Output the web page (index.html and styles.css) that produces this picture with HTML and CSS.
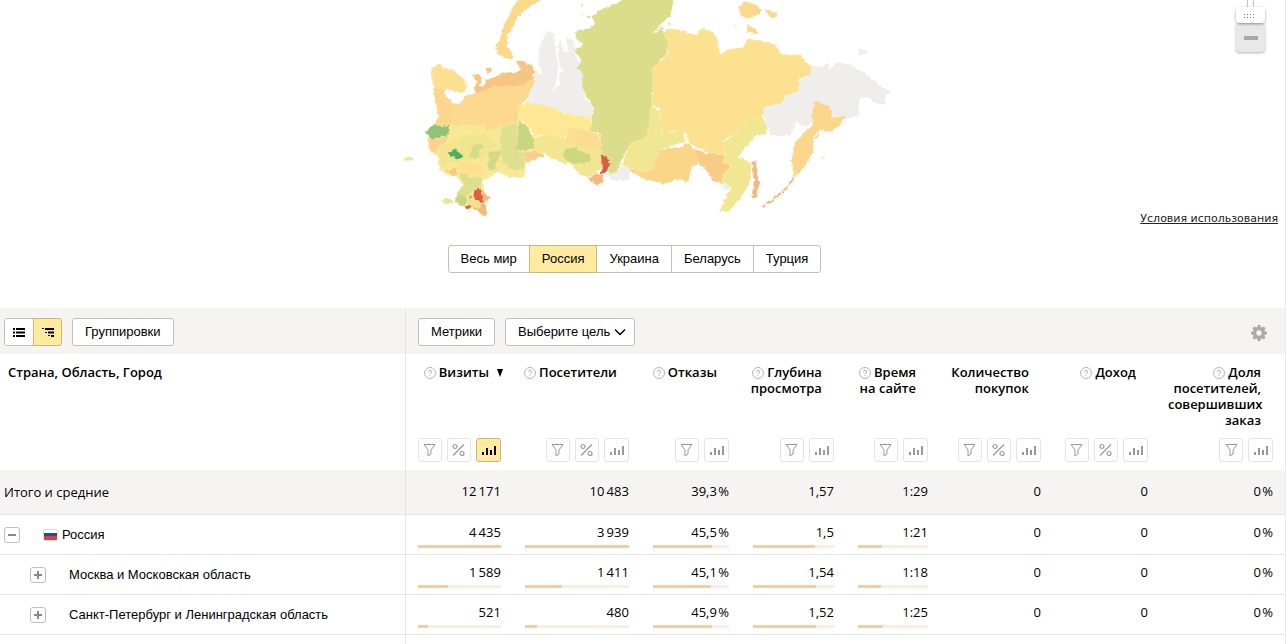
FILE: index.html
```
<!DOCTYPE html>
<html lang="ru">

<head>
    <title>География</title>
    <meta charset="UTF-8">
    <meta name="viewport" content="width=device-width, initial-scale=1">

    <link rel="stylesheet" href="styles.css">
</head>

<body>
    <svg class="sprite" aria-hidden="true">
        <symbol id="i-filter" viewBox="0 0 14 14">
            <path d="M1.5 1.5h11L8.5 7v4l-3 2V7z" fill="none" stroke="currentColor" />
        </symbol>
        <symbol id="i-percent" viewBox="0 0 14 14">
            <path d="M12.5 1.5l-11 11" fill="none" stroke="currentColor" stroke-width="1.3" />
            <circle cx="3.5" cy="3.5" r="2" fill="none" stroke="currentColor" stroke-width="1.2" />
            <circle cx="10.5" cy="10.5" r="2" fill="none" stroke="currentColor" stroke-width="1.2" />
        </symbol>
        <symbol id="i-chart" viewBox="0 0 15 14">
            <path d="M1 9h2v3H1zM5 5h2v7H5zM9 7h2v5H9zM13 3h2v9h-2z" fill="currentColor" />
        </symbol>
        <symbol id="i-help" viewBox="0 0 12 12">
            <circle cx="6" cy="6" r="5.5" fill="none" stroke="#b5b5b5" />
            <path d="M4.4 4.8c0-2 3.200-2 3.200 0 0 1.200-1.600 1.200-1.600 2.400M6 8.200v1" fill="none" stroke="#999" stroke-width=".9" />
        </symbol>
        <symbol id="i-list" viewBox="0 0 12 9">
            <path d="M0 0h2v2H0zM3 0h9v2H3zM0 3.500h2v2H0zM3 3.500h9v2H3zM0 7h2v2H0zM3 7h9v2H3z" />
        </symbol>
        <symbol id="i-tree" viewBox="0 0 12 9">
            <path d="M0 0h2v1H0zM3 0h9v2H3zM3 4h2v1H3zM6 3.500h6v2H6zM6 7h2v1H6zM9 7h3v2H9z" />
        </symbol>
    </svg>

    <main class="page">
        <section class="geo">
            <svg class="map" viewBox="-24 0 1503 660" role="img" aria-label="Карта России">
                <defs>
                    <filter id="coast" x="0" y="0" width="100%" height="100%" color-interpolation-filters="sRGB">
                        <feTurbulence type="fractalNoise" baseFrequency=".09" numOctaves="2" seed="4" />
                        <feDisplacementMap in="SourceGraphic" scale="13" xChannelSelector="R" yChannelSelector="G" />
                    </filter>
                </defs>
                <g filter="url(#coast)" stroke="#fff3c4" stroke-opacity=".5" stroke-width="1">
                    <path d="M0-30H1500" stroke="none" />
                    <!-- european part -->
                    <path fill="#fbd98a" stroke="none" d="M432-4L385 22 355 48 337 85 320 112 324 142 340 165 337 178 312 174 292 157 286 138 300 120 305 90 325 50 343 15 360-4z" />
                    <path fill="#f6c583" stroke="none" d="M258 208L270 202 277 210 268 219 259 222z" />
                    <path fill="#fcd78c" stroke="none" d="M135 310L170 325 180 385 125 385z" />
                    <path fill="#f9e893" d="M105 372L250 375 352 362 405 410 432 462 378 482 375 515 370 530 330 533 290 512 270 530 246 545 250 572 268 595 255 612 262 640 252 650 230 630 200 627 165 605 172 575 190 555 172 530 145 525 120 510 115 470 88 452 82 415z" />
                    <path fill="#fce08f" d="M92 220L102 200 118 190 132 203 152 207 176 222 196 243 201 262 188 278 165 275 142 268 125 272 112 277 100 262 98 245z" />
                    <path fill="#fcd68a" d="M100 262L130 268 138 288 152 300 162 322 154 374 105 374 115 345 108 320z" />
                    <path fill="#fcd98e" d="M160 322L152 308 180 312 200 282 235 278 280 258 370 255 402 225 408 245 385 290 358 320 352 365 300 378 262 392 250 376 165 378 152 374z" />
                    <path fill="#f6c583" d="M218 225L240 222 246 240 238 258 250 260 258 240 285 230 310 215 340 217 358 215 360 205 345 182 365 182 390 192 404 210 398 232 370 258 280 258 260 270 230 280 220 262 232 247z" />
                    <path fill="#8fc377" d="M75 397L100 373 125 378 150 374 147 405 118 412 100 417 86 410z" />
                    <path fill="#fcd38c" d="M82 415L110 417 148 408 135 430 112 440 112 460 88 452z" />
                    <path fill="#f4cd85" d="M190 438L225 432 245 428 215 448 195 452z" />
                    <path fill="#f2e58f" d="M116 446L150 425 200 405 250 402 300 440 260 462 245 480 200 482 150 492 120 510z" />
                    <path fill="#d5db89" d="M220 437L240 430 250 438 238 455 238 470 225 478 207 472 215 450z" />
                    <path fill="#fbe08f" d="M162 492L205 482 245 490 258 520 215 525 180 515z" />
                    <path fill="#f9c983" d="M138 512L165 505 175 520 160 528z" />
                    <path fill="#dfe08e" d="M305 382L352 368 352 440 348 452 365 455 376 460 372 508 345 512 308 490 300 440z" />
                    <path fill="#c8d682" d="M356 365L378 370 390 395 408 425 402 447 375 452 343 448 352 425z" />
                    <path fill="#d2d987" d="M258 462L280 454 300 452 305 462 288 485 290 510 268 512 260 495 270 478z" />
                    <path fill="#fccd88" d="M376 458L402 452 434 466 400 480 374 489z" />
                    <path fill="#dcdf8e" d="M175 520L200 520 205 532 245 530 248 545 240 565 215 575 200 590 200 610 180 618 165 605 172 578 192 556z" />
                    <path fill="#c8d682" d="M172 585L190 582 202 600 195 620 175 612 165 603z" />
                    <path fill="#eee38f" d="M125 600L140 594 165 604 145 612 132 611z" />
                    <path fill="#f5b87a" d="M246 572L262 585 270 595 252 606 262 640 254 650 236 632 212 624 215 605 245 606z" />
                    <path fill="#eee08d" d="M202 600L222 596 248 608 240 625 210 622z" />
                    <path fill="#4fae64" stroke="none" d="M147 457L162 453 168 445 175 457 188 464 184 475 170 478 160 470 150 466z" />
                    <path fill="#dc5f43" stroke="none" d="M222 575L232 565 242 570 246 590 252 606 232 603 220 595z" />
                    <path fill="#dc5f43" stroke="none" d="M195 620L208 614 211 624 200 628zM204 590L212 588 210 594z" />
                    <path fill="#eee38f" stroke="none" d="M14 476L28 469 42 475 38 482 22 482z" />
                    <!-- siberia -->
                    <path fill="#efeeec" stroke="none" d="M400 208L428 224 415 185 418 140 430 115 445 93 463 100 466 150 474 200 470 245 458 272 480 255 478 220 495 212 480 207 474 160 480 115 492 155 503 155 498 110 520 120 530 170 550 215 555 290 580 325 575 352 500 347 450 324 378 308 388 280 408 240z" />
                    <path fill="#ffe894" d="M358 318L380 307 450 320 500 342 570 350 575 370 570 394 505 384 492 420 430 402 405 410 380 370 355 365z" />
                    <path fill="#f4e691" d="M406 412L440 402 498 418 570 440 605 445 610 500 572 528 540 527 515 492 490 490 455 475 432 460 402 450z" />
                    <path fill="#fcdd90" d="M505 382L570 392 598 405 605 450 568 445 495 427z" />
                    <path fill="#ccd780" d="M498 445L530 442 552 460 572 460 568 485 535 492 505 488 490 468z" />
                    <path fill="#efeeec" stroke="none" d="M612 522L650 515 665 497 692 500 685 540 640 542z" />
                    <path fill="#dcdd8b" stroke="none" d="M680-6L640 14 600 30 575 52 585 70 570 85 530 92 527 112 548 130 545 142 525 145 530 160 545 180 530 205 547 220 552 275 582 325 570 392 600 402 605 465 628 480 625 520 650 517 672 465 692 430 738 420 748 385 756 310 760 205 802 160 805 130 792 100 785 80 762 102 770 85 812 45 822-6z" />
                    <path fill="#dcdd8b" stroke="none" d="M545 12L552 14 549 24zM544 32L550 38 546 46zM562 42L572 50 566 55z" />
                    <path fill="#f5b87a" stroke="none" d="M566 536L585 520 608 528 608 545 590 556z" />
                    <path fill="#dc5f43" stroke="none" d="M602 466L620 470 629 492 622 512 602 524 609 505 606 485z" />
                    <path fill="#f1e692" d="M752 318L780 330 785 402 850 383 856 425 782 450 778 505 758 527 700 508 665 495 690 430 742 408z" />
                </g>
                <!-- east of the Yenisei -->
                <g filter="url(#coast)" stroke="#fff3c4" stroke-opacity=".5" stroke-width="1" transform="translate(720 0)">
                    <path d="M-50-30H760" stroke="none" />
                    <path fill="#fbd588" d="M-30 505L10 517 40 505 58 450 125 440 140 425 175 460 200 480 155 500 145 545 110 540 70 552 15 536 -28 515z" />
                    <path fill="#f9cb84" d="M165 447L200 460 258 464 252 485 275 500 248 525 250 553 218 543 200 510 178 495z" />
                    <path fill="#f1e692" d="M368 353L382 378 378 405 345 408 320 438 292 474 310 475 335 492 328 550 298 600 265 635 240 635 250 605 272 565 245 545 250 520 278 498 245 488 258 465 243 430 300 395 330 350z" />
                    <path fill="#fce190" d="M70 100L80 87 100 87 130 92 150 105 174 105 182 83 215 95 232 115 240 165 260 150 310 142 322 116 350 120 400 130 428 165 480 163 500 190 515 200 513 227 480 235 478 275 440 285 425 310 370 325 368 358 330 353 300 395 250 420 255 462 210 460 150 432 130 385 65 405 60 325 35 315 40 205 80 165 85 130z" />
                    <path fill="#efeeec" stroke="none" d="M515 197L545 200 562 188 572 210 582 188 630 192 680 223 710 248 750 276 737 292 735 314 705 308 685 292 662 295 655 320 660 348 615 357 565 345 570 322 530 308 518 365 498 382 470 365 452 402 420 410 388 400 370 345 370 325 430 310 445 285 478 275 476 240 513 227z" />
                    <path fill="#efeeec" stroke="none" d="M650 160L662 148 678 150 686 157 670 165zM243 558L262 552 272 565 248 573z" />
                    <path fill="#fcd68a" stroke="none" d="M525 304L568 318 576 350 614 350 600 375 575 395 540 390 520 408 520 455 490 505 463 532 455 480 465 430 490 400 518 375 515 340z" />
                    <path fill="#fcd68a" stroke="none" d="M522 412L532 402 536 410 526 418zM542 468L560 478 545 474z" />
                    <path fill="none" stroke="#f5b87a" stroke-opacity="1" stroke-width="6" stroke-dasharray="26 4" d="M461 532L450 550 432 572 405 595 368 620" />
                    <path fill="#f5b87a" stroke="none" d="M337 486L347 480 352 525 362 556 350 565 353 590 346 598 334 592 338 570 343 540z" />
                    <path fill="#fbd98a" stroke="none" d="M296 22L310 6 330 10 348 14 366 30 352 46 318 56 300 45zM374 28L395 34 413 40 412 52 395 54 376 40zM322 72L332 80 345 82 353 102 322 98zM284 72L290 80 286 84zM85 65L92 70 86 80z" />
                </g>
            </svg>

            <div class="zoom">
                <input class="zoom-slider" type="range" min="0" max="10" value="0" aria-label="Масштаб">
                <button class="zoom-out" type="button" aria-label="Отдалить"></button>
            </div>
            <a class="terms" href="#terms">Условия использования</a>

            <div class="segmented">
                <button type="button">Весь мир</button>
                <button type="button" class="active">Россия</button>
                <button type="button">Украина</button>
                <button type="button">Беларусь</button>
                <button type="button">Турция</button>
            </div>
        </section>

        <table class="report">
            <colgroup>
                <col>
                <col class="w-visits">
                <col class="w-users">
                <col class="w-bounce">
                <col class="w-depth">
                <col class="w-time">
                <col class="w-orders">
                <col class="w-income">
                <col class="w-share">
            </colgroup>
            <thead>
                <tr class="tools">
                    <td>
                        <div class="bar">
                            <div class="segmented view">
                                <button type="button" aria-label="Список"><svg><use href="#i-list" /></svg></button>
                                <button type="button" class="active" aria-label="Дерево"><svg><use href="#i-tree" /></svg></button>
                            </div>
                            <button type="button" class="btn">Группировки</button>
                        </div>
                    </td>
                    <td colspan="8">
                        <div class="bar">
                            <button type="button" class="btn">Метрики</button>
                            <button type="button" class="btn goal">Выберите цель
                                <svg viewBox="0 0 12 8"><path d="M1 1.500l5 5 5-5" fill="none" stroke="#000" stroke-width="1.500" /></svg>
                            </button>
                            <button type="button" class="gear" aria-label="Настройки">
                                <svg viewBox="0 0 16 16">
                                    <path fill="#aaa" fill-rule="evenodd" d="M6.700 0h2.600l.4 2.100 1.300.5L12.800 1.400l1.800 1.800-1.200 1.800.5 1.300 2.100.4v2.600l-2.100.4-.5 1.300 1.200 1.800-1.800 1.800-1.800-1.200-1.300.5-.4 2.100H6.700l-.4-2.100-1.300-.5-1.800 1.200-1.800-1.800 1.200-1.800-.5-1.300L0 9.300V6.700l2.100-.4.5-1.300L1.400 3.200l1.800-1.800L5 2.600l1.300-.5zM8 5.300a2.700 2.700 0 1 0 0 5.400 2.700 2.700 0 0 0 0-5.400z" />
                                </svg>
                            </button>
                        </div>
                    </td>
                </tr>
                <tr class="heads">
                    <th scope="col">Страна, Область, Город</th>
                    <th scope="col">
                        <div class="title sorted"><svg class="help"><use href="#i-help" /></svg>Визиты<i class="arrow"></i></div>
                        <div class="icons">
                            <button type="button" aria-label="Фильтр"><svg><use href="#i-filter" /></svg></button>
                            <button type="button" aria-label="Проценты"><svg><use href="#i-percent" /></svg></button>
                            <button type="button" class="active" aria-label="График"><svg><use href="#i-chart" /></svg></button>
                        </div>
                    </th>
                    <th scope="col">
                        <div class="title"><svg class="help"><use href="#i-help" /></svg>Посетители</div>
                        <div class="icons">
                            <button type="button" aria-label="Фильтр"><svg><use href="#i-filter" /></svg></button>
                            <button type="button" aria-label="Проценты"><svg><use href="#i-percent" /></svg></button>
                            <button type="button" aria-label="График"><svg><use href="#i-chart" /></svg></button>
                        </div>
                    </th>
                    <th scope="col">
                        <div class="title"><svg class="help"><use href="#i-help" /></svg>Отказы</div>
                        <div class="icons">
                            <button type="button" aria-label="Фильтр"><svg><use href="#i-filter" /></svg></button>
                            <button type="button" aria-label="График"><svg><use href="#i-chart" /></svg></button>
                        </div>
                    </th>
                    <th scope="col">
                        <div class="title"><svg class="help"><use href="#i-help" /></svg>Глубина<br>просмотра</div>
                        <div class="icons">
                            <button type="button" aria-label="Фильтр"><svg><use href="#i-filter" /></svg></button>
                            <button type="button" aria-label="График"><svg><use href="#i-chart" /></svg></button>
                        </div>
                    </th>
                    <th scope="col">
                        <div class="title"><svg class="help"><use href="#i-help" /></svg>Время<br>на сайте</div>
                        <div class="icons">
                            <button type="button" aria-label="Фильтр"><svg><use href="#i-filter" /></svg></button>
                            <button type="button" aria-label="График"><svg><use href="#i-chart" /></svg></button>
                        </div>
                    </th>
                    <th scope="col">
                        <div class="title">Количество<br>покупок</div>
                        <div class="icons">
                            <button type="button" aria-label="Фильтр"><svg><use href="#i-filter" /></svg></button>
                            <button type="button" aria-label="Проценты"><svg><use href="#i-percent" /></svg></button>
                            <button type="button" aria-label="График"><svg><use href="#i-chart" /></svg></button>
                        </div>
                    </th>
                    <th scope="col">
                        <div class="title"><svg class="help"><use href="#i-help" /></svg>Доход</div>
                        <div class="icons">
                            <button type="button" aria-label="Фильтр"><svg><use href="#i-filter" /></svg></button>
                            <button type="button" aria-label="Проценты"><svg><use href="#i-percent" /></svg></button>
                            <button type="button" aria-label="График"><svg><use href="#i-chart" /></svg></button>
                        </div>
                    </th>
                    <th scope="col">
                        <div class="title"><svg class="help"><use href="#i-help" /></svg>Доля<br>посетителей,<br>совершивших<br>заказ</div>
                        <div class="icons">
                            <button type="button" aria-label="Фильтр"><svg><use href="#i-filter" /></svg></button>
                            <button type="button" aria-label="График"><svg><use href="#i-chart" /></svg></button>
                        </div>
                    </th>
                </tr>
            </thead>
            <tbody>
                <tr class="total">
                    <th scope="row">Итого и средние</th>
                    <td>12&#8201;171</td>
                    <td>10&#8201;483</td>
                    <td>39,3&#8202;%</td>
                    <td>1,57</td>
                    <td>1:29</td>
                    <td>0</td>
                    <td>0</td>
                    <td>0&#8202;%</td>
                </tr>
                <tr>
                    <th scope="row">
                        <div class="name">
                            <button type="button" class="toggle open" aria-label="Свернуть"></button>
                            <i class="flag"></i>Россия
                        </div>
                    </th>
                    <td>4&#8201;435<div class="meter"><i style="width:100%"></i></div></td>
                    <td>3&#8201;939<div class="meter"><i style="width:100%"></i></div></td>
                    <td>45,5&#8202;%<div class="meter"><i style="width:78%"></i></div></td>
                    <td>1,5<div class="meter"><i style="width:77%"></i></div></td>
                    <td>1:21<div class="meter"><i style="width:34%"></i></div></td>
                    <td>0</td>
                    <td>0</td>
                    <td>0&#8202;%</td>
                </tr>
                <tr>
                    <th scope="row">
                        <div class="name child">
                            <button type="button" class="toggle" aria-label="Развернуть"></button>
                            Москва и Московская область
                        </div>
                    </th>
                    <td>1&#8201;589<div class="meter"><i style="width:36%"></i></div></td>
                    <td>1&#8201;411<div class="meter"><i style="width:36%"></i></div></td>
                    <td>45,1&#8202;%<div class="meter"><i style="width:77%"></i></div></td>
                    <td>1,54<div class="meter"><i style="width:78%"></i></div></td>
                    <td>1:18<div class="meter"><i style="width:33%"></i></div></td>
                    <td>0</td>
                    <td>0</td>
                    <td>0&#8202;%</td>
                </tr>
                <tr>
                    <th scope="row">
                        <div class="name child">
                            <button type="button" class="toggle" aria-label="Развернуть"></button>
                            Санкт-Петербург и Ленинградская область
                        </div>
                    </th>
                    <td>521<div class="meter"><i style="width:12%"></i></div></td>
                    <td>480<div class="meter"><i style="width:12%"></i></div></td>
                    <td>45,9&#8202;%<div class="meter"><i style="width:78%"></i></div></td>
                    <td>1,52<div class="meter"><i style="width:78%"></i></div></td>
                    <td>1:25<div class="meter"><i style="width:36%"></i></div></td>
                    <td>0</td>
                    <td>0</td>
                    <td>0&#8202;%</td>
                </tr>
            </tbody>
            <tfoot>
                <tr>
                    <td></td>
                    <td colspan="8"></td>
                </tr>
            </tfoot>
        </table>
    </main>
</body>

</html>
```
FILE: styles.css
```
* {
    box-sizing: border-box;
}

body {
    background-color: #fff;
    margin: 0px;
    color: #000;
    font: 13px/16px "Liberation Sans", Arial, sans-serif;
}

button {
    margin: 0;
    padding: 0;
    border: 1px solid #bfbfbf;
    border-radius: 3px;
    background: #fff;
    color: #000;
    font: inherit;
    cursor: pointer;
}

.sprite {
    display: none;
}

.page {
    border-right: 1px solid #ececec;
}

/* map */
.geo {
    position: relative;
    display: flex;
    flex-direction: column;
    align-items: center;
    padding-bottom: 35px;
}

.map {
    display: block;
    width: 501px;
    height: 220px;
}

.geo .segmented {
    margin: 25px 16px 0 0;
}

.zoom {
    position: absolute;
    top: 0;
    right: 20px;
    width: 29px;
}

.zoom-slider {
    -webkit-appearance: none;
    appearance: none;
    writing-mode: vertical-lr;
    direction: rtl;
    display: block;
    width: 29px;
    height: 23px;
    margin: 0;
    background: linear-gradient(90deg, transparent 11px, #c4c4c4 11px, #c4c4c4 12px, transparent 12px, transparent 17px, #c4c4c4 17px, #c4c4c4 18px, transparent 18px);
}

/* dotted grip */
.zoom-slider::-webkit-slider-thumb {
    -webkit-appearance: none;
    width: 29px;
    height: 16px;
    border-radius: 4px;
    background:
        linear-gradient(#fff, #fff) 0 0 / 29px 6px no-repeat,
        linear-gradient(#fff, #fff) 0 11px / 29px 5px no-repeat,
        linear-gradient(#fff, #fff) 0 0 / 8px 16px no-repeat,
        linear-gradient(#fff, #fff) 20px 0 / 9px 16px no-repeat,
        repeating-linear-gradient(90deg, #fff 0 2px, transparent 2px 3px),
        repeating-linear-gradient(#fff 0 1px, #666 1px 2px, #fff 2px 3px);
    box-shadow: 0 1px 3px rgba(0, 0, 0, .4);
}

.zoom-out {
    display: flex;
    align-items: center;
    justify-content: center;
    width: 29px;
    height: 29px;
    border: 0;
    border-radius: 4px;
    background: #e8e8e8;
    box-shadow: 0 1px 3px rgba(0, 0, 0, .3);
}

.zoom-out::before {
    content: "";
    width: 14px;
    height: 4px;
    background: #a8a8a8;
}

.terms {
    position: absolute;
    top: 211px;
    right: 7px;
    color: #222;
    font: 11px/16px "DejaVu Sans", Verdana, sans-serif;
}

/* buttons */
.segmented {
    display: flex;
}

.segmented button {
    height: 28px;
    margin-left: -1px;
    padding: 0 12px;
    border-radius: 0;
}

.segmented button:first-child {
    margin-left: 0;
    border-radius: 3px 0 0 3px;
}

.segmented button:last-child {
    border-radius: 0 3px 3px 0;
}

.segmented .active,
.icons .active {
    position: relative;
    border-color: #c9b879;
    background: #ffeba0;
}

.segmented.view button {
    display: flex;
    align-items: center;
    justify-content: center;
    width: 30px;
    padding: 0;
}

.segmented.view .active {
    width: 29px;
}

.view svg {
    width: 12px;
    height: 9px;
}

.btn {
    height: 28px;
    padding: 0 12px;
}

.goal {
    display: flex;
    align-items: center;
    gap: 4px;
    padding-right: 8px;
}

.goal svg {
    width: 12px;
    height: 8px;
}

.gear {
    width: 16px;
    height: 16px;
    margin: 2px 6px 0 auto;
    border: 0;
    background: none;
}

.gear svg {
    display: block;
}

/* report */
.report {
    width: 100%;
    table-layout: fixed;
    border-collapse: separate;
    border-spacing: 0;
}

.w-visits { width: 108px; }
.w-users { width: 128px; }
.w-bounce { width: 100px; }
.w-depth { width: 105px; }
.w-time { width: 94px; }
.w-orders { width: 113px; }
.w-income { width: 107px; }
.w-share { width: 125px; }

.report td,
.report th {
    padding: 0 12px;
    text-align: right;
}

.report th:first-child,
.report td:first-child {
    padding: 0 4px;
    text-align: left;
}

.report th:nth-child(2),
.report td:nth-child(2) {
    border-left: 1px solid #e6e6e6;
}

.tools td {
    height: 46px;
    background: #f5f4f2;
}

.bar {
    display: flex;
    align-items: center;
    gap: 10px;
    padding-top: 2px;
}

.heads th {
    height: 116px;
    vertical-align: top;
    font-family: "Open Sans", "Noto Sans", sans-serif;
    font-weight: 600;
}

.report .heads th {
    padding-top: 10px;
}

.report .heads th:first-child {
    padding-left: 8px;
}

.title {
    height: 74px;
    margin: 0 12px 0 -4px;
    white-space: nowrap;
}

.title.sorted {
    margin-right: -2px;
}

.help {
    width: 12px;
    height: 12px;
    margin-right: 3px;
    vertical-align: -2px;
}

.arrow {
    display: inline-block;
    margin-left: 8px;
    border: 3px solid transparent;
    border-top: 8px solid #000;
    border-bottom: 0;
}

.icons {
    display: flex;
    justify-content: flex-end;
    gap: 5px;
}

.icons button {
    display: flex;
    align-items: center;
    justify-content: center;
    width: 24px;
    height: 24px;
    border-color: #e4e4e4;
    color: #999;
}

.icons button:last-child {
    width: 25px;
}

.icons .active {
    border-color: #c9b879;
    color: #000;
}

.icons svg {
    width: 15px;
    height: 14px;
}

tbody td,
tbody th {
    height: 40px;
    border-bottom: 1px solid #e6e6e6;
    font-weight: 400;
}

.report tbody td {
    padding-top: 9px;
    vertical-align: top;
    font-family: "Open Sans", "Noto Sans", sans-serif;
}

.report .total td,
.total th {
    height: 45px;
    background: #f5f4f2;
}

.report .total td {
    padding-top: 13px;
}

.total th {
    font-family: "Open Sans", "Noto Sans", sans-serif;
}

.name {
    display: flex;
    align-items: center;
    padding-top: 1px;
}

.name.child {
    padding-left: 26px;
}

.toggle {
    width: 16px;
    height: 16px;
    margin-right: 23px;
    background:
        linear-gradient(#888, #888) center / 8px 2px no-repeat,
        linear-gradient(#888, #888) center / 2px 8px no-repeat,
        #fff;
}

.toggle.open {
    background: linear-gradient(#888, #888) center / 8px 2px no-repeat, #fff;
}

.flag {
    width: 15px;
    height: 12px;
    margin-right: 4px;
    border: 1px solid #ddd;
    border-radius: 2px;
    background: linear-gradient(#fff 3px, #2b4a9f 3px, #2b4a9f 6px, #cc4444 6px);
}

.meter {
    height: 3px;
    margin-top: 5px;
    background: #faeee0;
}

.meter i {
    display: block;
    height: 3px;
    background: #f2cda5;
}

tfoot td {
    height: 9px;
}
```
